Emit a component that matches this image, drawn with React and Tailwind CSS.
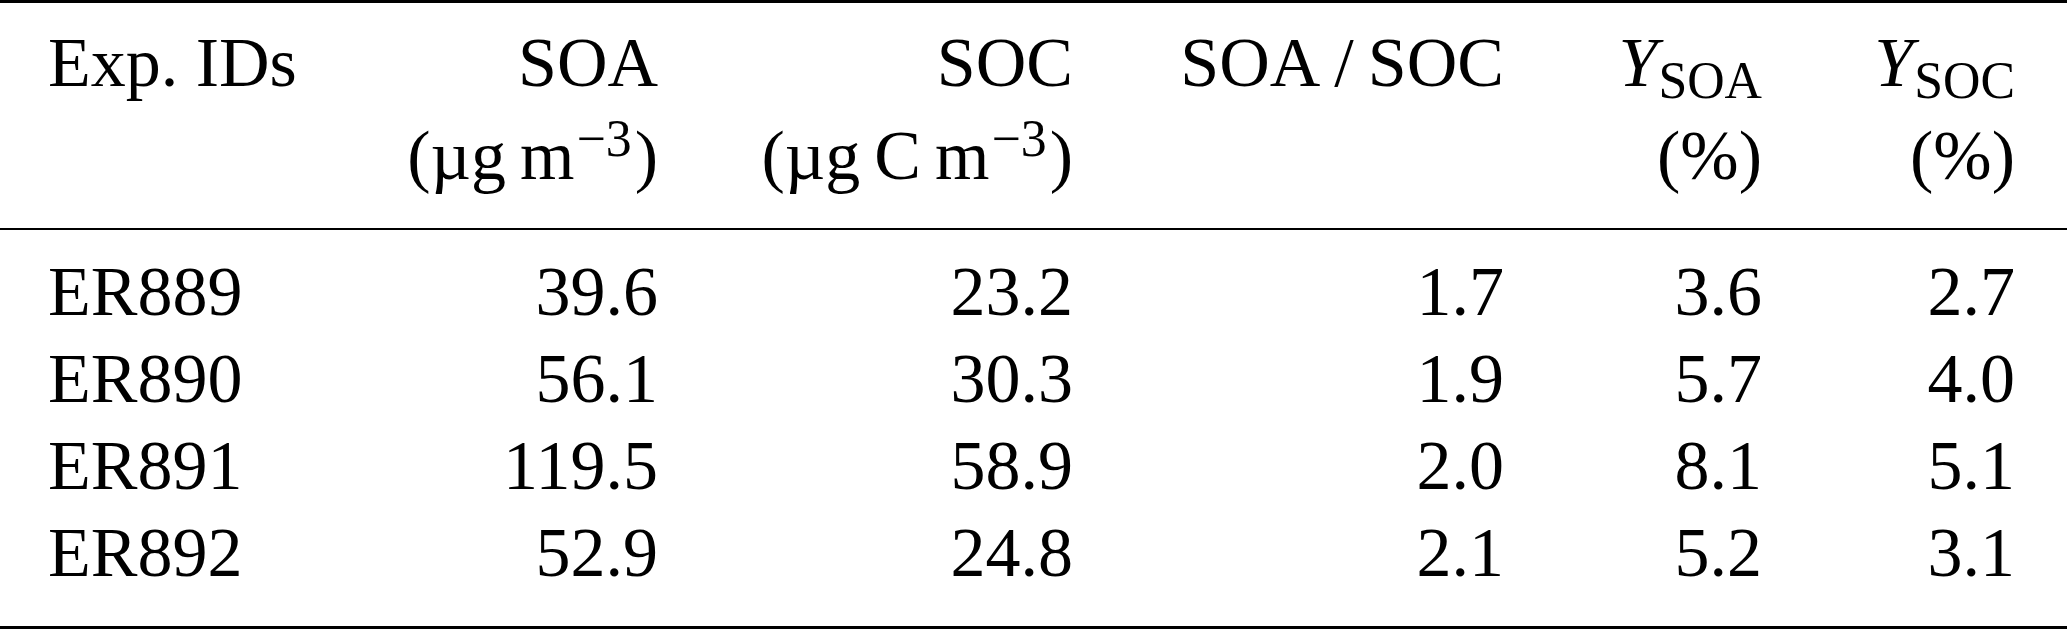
import React from 'react';

const rows = [
    { id: 'ER889', soa: '39.6', soc: '23.2', ratio: '1.7', ySoa: '3.6', ySoc: '2.7' },
    { id: 'ER890', soa: '56.1', soc: '30.3', ratio: '1.9', ySoa: '5.7', ySoc: '4.0' },
    { id: 'ER891', soa: '119.5', soc: '58.9', ratio: '2.0', ySoa: '8.1', ySoc: '5.1' },
    { id: 'ER892', soa: '52.9', soc: '24.8', ratio: '2.1', ySoa: '5.2', ySoc: '3.1' },
];

const cols = 'grid grid-cols-[300px_310px_415px_431px_258px_253px] pl-[48px]';

const Sup = ({ children }) => (
    <span className="relative -top-[0.44em] ml-[0.04em] mr-[0.06em] text-[0.74em] leading-none">{children}</span>
);

const Sub = ({ children }) => (
    <span className="relative top-[0.24em] ml-[0.02em] text-[0.74em] leading-none">{children}</span>
);

const HeadCell = ({ top, bottom }) => (
    <div className="flex flex-col items-end text-right">
        <div className="h-[87px] whitespace-nowrap">{top}</div>
        {bottom && <div className="mt-[6px] h-[87px] whitespace-nowrap">{bottom}</div>}
    </div>
);

const App = () => {
    return (
        <div className="w-[2067px] h-[629px] bg-white text-black text-[70px] leading-[87px] font-['Liberation_Serif','Times_New_Roman',serif]">
            <div className="border-t-[3px] border-black">
                <div className={`${cols} pt-[16px] pb-[29px]`}>
                    <div className="whitespace-nowrap">Exp. IDs</div>
                    <HeadCell
                        top="SOA"
                        bottom={<>(µg{'\u2009'}m<Sup>−3</Sup>)</>}
                    />
                    <HeadCell
                        top="SOC"
                        bottom={<>(µg{'\u2009'}C{'\u2009'}m<Sup>−3</Sup>)</>}
                    />
                    <HeadCell top={<>SOA{'\u2009'}/{'\u2009'}SOC</>} />
                    <HeadCell
                        top={<><span className="italic">Y</span><Sub>SOA</Sub></>}
                        bottom="(%)"
                    />
                    <HeadCell
                        top={<><span className="italic">Y</span><Sub>SOC</Sub></>}
                        bottom="(%)"
                    />
                </div>
            </div>
            <div className="border-t-[2px] border-b-[3px] border-black pt-[18px] pb-[30px]">
                {rows.map((row) => (
                    <div key={row.id} className={`${cols} h-[87px]`}>
                        <div>{row.id}</div>
                        <div className="text-right">{row.soa}</div>
                        <div className="text-right">{row.soc}</div>
                        <div className="text-right">{row.ratio}</div>
                        <div className="text-right">{row.ySoa}</div>
                        <div className="text-right">{row.ySoc}</div>
                    </div>
                ))}
            </div>
        </div>
    );
};

export default App;
